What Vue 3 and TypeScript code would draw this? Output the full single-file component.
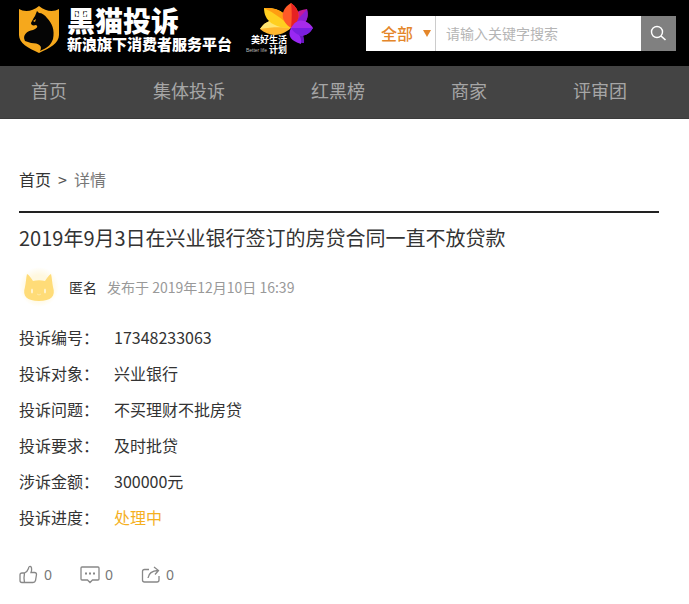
<script setup lang="ts">
import { ref } from 'vue'

interface Field {
  label: string
  value: string
  active?: boolean
}

const keyword = ref('')
const scope = ref('all')
const navItems: string[] = ['首页', '集体投诉', '红黑榜', '商家', '评审团']
const fields: Field[] = [
  { label: '投诉编号：', value: '17348233063' },
  { label: '投诉对象：', value: '兴业银行' },
  { label: '投诉问题：', value: '不买理财不批房贷' },
  { label: '投诉要求：', value: '及时批贷' },
  { label: '涉诉金额：', value: '300000元' },
  { label: '投诉进度：', value: '处理中', active: true },
]
</script>

<template>
  <div class="page" lang="zh-CN">
    <header class="top">
      <a class="brand" href="#">
        <svg class="shield" viewBox="0 0 40 48" aria-hidden="true">
          <path d="M0 3 C5 6 13 6 20 0 C27 6 35 6 40 3 L40 29 C40 37 31 42 20 47 C9 42 0 37 0 29 Z" fill="#f6a81c" />
          <path d="M18 5 L20 7 C23 7 26 9 28 12 C33 17 36 24 34 33 C32 39 28 42 21 45 C24 40 20 37 12 37 L6 35 C3 29 8 25 14 24 C19 22 19 20 17 19 C14 20 12 19 12 17 C13 15 14 13 16 10 Z" fill="#050505" />
          <path d="M14 15 L17 13 L16 16 Z" fill="#f6a81c" />
        </svg>
        <span class="brand-text">
          <strong>黑猫投诉</strong>
          <span>新浪旗下消费者服务平台</span>
        </span>
      </a>
      <a class="campaign" href="#">
        <svg class="flower" viewBox="0 0 54 42" aria-hidden="true">
          <path d="M31 25 C20 35 8 33 0 26 C8 14 20 15 31 25 Z" fill="#ffb62e" />
          <path d="M31 25 C20 15 8 14 0 26 C12 24 20 24 31 25 Z" fill="#ffe571" />
          <path d="M31 25 C14 25 4 18 4 5 C19 4 30 11 31 25 Z" fill="#ffcf20" />
          <path d="M31 25 C22 15 14 10 4 5 C19 4 30 11 31 25 Z" fill="#ff9d12" />
          <path d="M31 25 C29 14 36 7 47 6 C50 18 43 25 31 25 Z" fill="#c4189a" />
          <path d="M31 25 C37 17 42 12 47 6 C50 18 43 25 31 25 Z" fill="#8c1ed0" />
          <path d="M31 25 C19 17 21 6 31 0 C41 7 41 17 31 25 Z" fill="#ff5a28" />
          <path d="M31 25 C32 15 32 7 31 0 C41 7 41 18 31 25 Z" fill="#e62222" />
          <path d="M31 25 C37 40 40 40 44 40 C45 31 40 26 31 25 Z" fill="#6a16c0" />
          <path d="M31 25 C27 33 31 38 41 41 C42 34 38 28 31 25 Z" fill="#9928f3" />
          <path d="M31 25 C37 14 47 16 53 25 C46 36 37 34 31 25 Z" fill="#a62be9" />
          <path d="M31 25 L53 25 C46 36 37 34 31 25 Z" fill="#7a1fe0" />
        </svg>
        <span class="campaign-title">美好生活</span>
        <span class="campaign-sub"><small>Better life</small>计划</span>
      </a>
      <form class="search" @submit.prevent>
        <div class="scope">
          <select v-model="scope" aria-label="搜索范围">
            <option value="all">全部</option>
          </select>
          <svg class="caret" viewBox="0 0 8 7" aria-hidden="true"><path d="M0 0 H8 L4 7 Z" fill="#e4862a" /></svg>
        </div>
        <input v-model="keyword" type="text" placeholder="请输入关键字搜索" aria-label="请输入关键字搜索" />
        <button type="submit" aria-label="搜索">
          <svg viewBox="0 0 17 17" aria-hidden="true">
            <circle cx="7" cy="7" r="5.5" fill="none" stroke="#fff" stroke-width="1.4" />
            <path d="M11 11 L15.5 15" fill="none" stroke="#fff" stroke-width="1.6" />
          </svg>
        </button>
      </form>
    </header>

    <nav class="nav">
      <a v-for="item in navItems" :key="item" href="#">{{ item }}</a>
    </nav>

    <main class="content">
      <div class="crumbs">
        <a href="#">首页</a><span class="sep">&gt;</span><span class="current">详情</span>
      </div>

      <h1>2019年9月3日在兴业银行签订的房贷合同一直不放贷款</h1>

      <div class="author">
        <svg class="avatar" viewBox="0 0 40 40" aria-hidden="true">
          <defs>
            <radialGradient id="avatar-glow">
              <stop offset="0.6" stop-color="#fff8e0" />
              <stop offset="1" stop-color="#ffffff" />
            </radialGradient>
          </defs>
          <circle cx="20" cy="20" r="20" fill="url(#avatar-glow)" />
          <path d="M8 7 C10 8 12 11 14 14 C18 13 22 13 26 14 C28 11 30 8 32 7 C33 11 33 15 34 20 C37 29 32 34 20 34 C8 34 3 29 6 20 C7 15 7 11 8 7 Z" fill="#ffdc78" />
          <ellipse cx="13" cy="24" rx="1" ry="2.5" fill="#fff5d4" />
          <ellipse cx="26" cy="24" rx="1" ry="2.5" fill="#fff5d4" />
          <path d="M18 27 Q20 29 22 27" fill="none" stroke="#ffe9a7" />
        </svg>
        <span class="name">匿名</span>
        <span class="time">发布于 2019年12月10日 16:39</span>
      </div>

      <dl class="fields">
        <div v-for="field in fields" :key="field.label" class="field">
          <dt>{{ field.label }}</dt>
          <dd :class="{ active: field.active }">{{ field.value }}</dd>
        </div>
      </dl>

      <div class="actions">
        <button type="button" aria-label="点赞 0">
          <svg viewBox="0 0 20 20" aria-hidden="true">
            <path d="M5.500 8 H3 Q1 8 1 10 V15.500 Q1 17.500 3 17.500 H14 Q16 17.500 16.500 15.500 L17.500 9.500 Q17.500 7.500 15.500 7.500 H12 Q13 5 12.500 3 Q12 1 10.500 1.500 Q9.500 2 9.500 3.500 Q8.500 6.500 5.500 8 Z M5.500 8 Q4.500 13 5.500 17.500" />
          </svg>
          <span>0</span>
        </button>
        <button type="button" aria-label="评论 0">
          <svg viewBox="0 0 20 20" aria-hidden="true">
            <path d="M2 2 H18 Q19 2 19 3 V14 Q19 15 18 15 H12.500 L10 17.500 L7.500 15 H2 Q1 15 1 14 V3 Q1 2 2 2 Z" />
            <path d="M5 8.500 H7 M9 8.500 H11 M13 8.500 H15" stroke-width="2" />
          </svg>
          <span>0</span>
        </button>
        <button type="button" aria-label="分享 0">
          <svg viewBox="0 0 20 20" aria-hidden="true">
            <path d="M8 4.500 H3.500 Q1.500 4.500 1.500 6.500 V15 Q1.500 17 3.500 17 H16 Q18 17 18 15 V11 M7 13 Q8 6 17 5.500 M13 2 L17.500 5.500 L14 9.500" />
          </svg>
          <span>0</span>
        </button>
      </div>
    </main>
  </div>
</template>

<style>
body {
  margin: 0;
  background: #fff;
}
</style>

<style scoped>
.page {
  font-family: "Noto Sans CJK SC", sans-serif;
  font-size: 16px;
  line-height: 24px;
  color: #333;
}
a {
  color: inherit;
  text-decoration: none;
}
.top {
  display: flex;
  align-items: flex-start;
  height: 66px;
  padding: 0 13px 0 19px;
  background: #000;
  color: #fff;
}
.brand {
  display: flex;
  gap: 8px;
  padding-top: 6px;
}
.shield {
  width: 40px;
  height: 48px;
}
.brand-text {
  display: flex;
  flex-direction: column;
  white-space: nowrap;
  font-size: 15px;
  font-weight: 900;
  line-height: 18px;
}
.brand-text strong {
  font-size: 28px;
  font-weight: 900;
  line-height: 29px;
}
.campaign {
  display: grid;
  justify-items: end;
  margin-left: 10px;
  padding-top: 3px;
  width: 72px;
  font-size: 9px;
  font-weight: 700;
  line-height: 10px;
  white-space: nowrap;
}
.flower {
  grid-area: 1 / 1;
  width: 54px;
  height: 42px;
}
.campaign-title {
  grid-area: 1 / 1;
  align-self: end;
  margin-right: 27px;
  z-index: 1;
}
.campaign-sub {
  margin-right: 27px;
}
.campaign-sub small {
  margin-right: 2px;
  font-family: "Liberation Sans", sans-serif;
  font-size: 5px;
  font-weight: 400;
  color: #bbb;
  vertical-align: top;
}
.search {
  display: flex;
  width: 310px;
  height: 35px;
  margin-top: 16px;
  margin-left: auto;
  background: #fff;
}
.scope {
  display: grid;
  align-items: center;
  width: 69px;
  border-right: 1px solid #ccc;
}
.scope select {
  grid-area: 1 / 1;
  height: 100%;
  padding: 0 0 2px 15px;
  border: 0;
  appearance: none;
  background: transparent;
  color: #e4862a;
  font: inherit;
  font-weight: 500;
}
.caret {
  grid-area: 1 / 1;
  justify-self: end;
  width: 8px;
  height: 7px;
  margin-right: 4px;
  pointer-events: none;
}
.search input {
  flex: 1;
  min-width: 0;
  padding: 0 10px 2px;
  border: 0;
  background: transparent;
  font: inherit;
  font-size: 14px;
}
.search input::placeholder {
  color: #b5b5b5;
}
.search button {
  display: grid;
  place-items: center;
  width: 35px;
  padding: 0;
  border: 0;
  background: #808080;
}
.search button svg {
  width: 17px;
  height: 17px;
}
.nav {
  display: flex;
  gap: 86px;
  padding: 11px 31px 15px;
  border-bottom: 1px solid #3b3b3b;
  background: #444;
  color: #a6a6a6;
  font-size: 18px;
  line-height: 26px;
  white-space: nowrap;
}
.content {
  padding: 48px 30px 16px 19px;
}
.crumbs {
  display: flex;
  gap: 7px;
  padding-bottom: 20px;
  border-bottom: 2px solid #222;
}
.sep {
  color: #555;
}
.current {
  color: #777;
}
h1 {
  margin: 10px 0 0;
  font-size: 20px;
  font-weight: 400;
  line-height: 30px;
}
.author {
  display: flex;
  align-items: center;
  margin-top: 14px;
  font-size: 14px;
}
.avatar {
  width: 40px;
  height: 40px;
  margin-right: 10px;
}
.name {
  margin-right: 10px;
}
.time {
  color: #999;
}
.fields {
  margin: 12px 0 0;
}
.field {
  display: flex;
  line-height: 36px;
}
dt {
  width: 95px;
}
dd {
  margin: 0;
}
.active {
  color: #f5b01e;
}
.actions {
  display: flex;
  gap: 28px;
  margin-top: 28px;
}
.actions button {
  display: flex;
  align-items: center;
  gap: 5px;
  padding: 0;
  border: 0;
  background: none;
  color: #777;
  font-family: "Noto Sans", sans-serif;
  font-size: 14px;
  line-height: 24px;
}
.actions svg {
  width: 20px;
  height: 20px;
  fill: none;
  stroke: #888;
  stroke-width: 1.3;
}
</style>
